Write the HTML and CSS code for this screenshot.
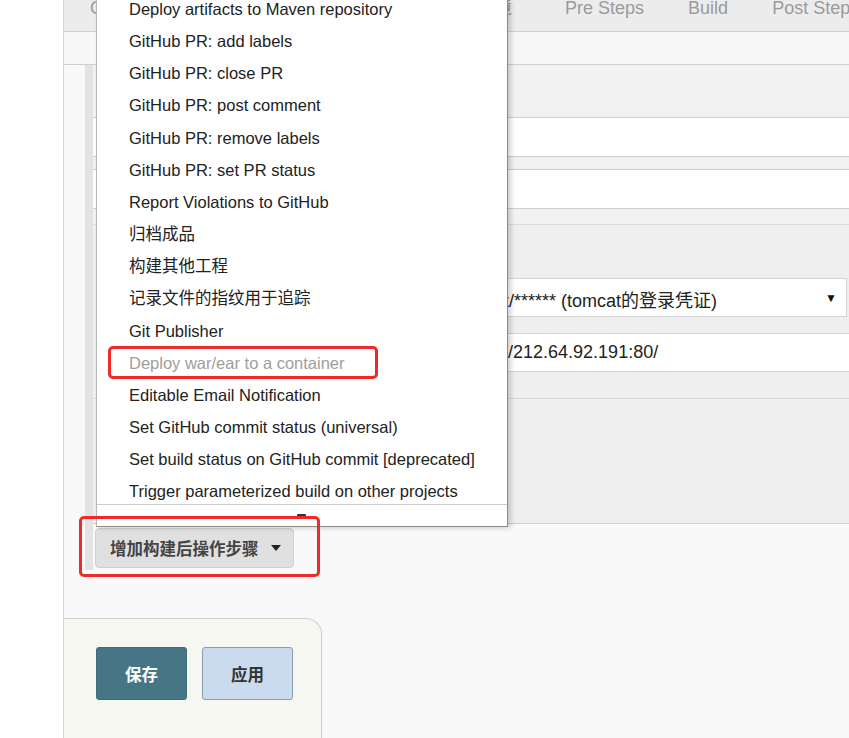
FILE: index.html
```html
<!DOCTYPE html>
<html lang="zh-CN">
<head>
<meta charset="utf-8">
<title>Jenkins 配置</title>
<link rel="stylesheet" href="styles.css">
</head>
<body>
<div class="page">
  <div class="gutter"></div>
  <div class="main">
    <div class="tabs">
      <span class="tab">General</span>
      <span class="tab">源码管理</span>
      <span class="tab">构建触发器</span>
      <span class="tab tab-env">构建环境</span>
      <span class="tab tab-pre">Pre Steps</span>
      <span class="tab">Build</span>
      <span class="tab">Post Steps</span>
    </div>
    <div class="sec-head"></div>
    <div class="config">
      <div class="row row-head"></div>
      <div class="row row-input"></div>
      <div class="row row-gap"></div>
      <div class="row row-input"></div>
      <div class="row row-gap2"></div>
      <div class="row deploy">
        <div class="select-box">
          <span class="select-text">tomcat/****** (tomcat的登录凭证)</span>
          <span class="select-arrow">▼</span>
        </div>
        <div class="url-box">http://212.64.92.191:80/</div>
        <div class="deploy-sep"></div>
      </div>
      <div class="add-area">
        <button class="add-btn">增加构建后操作步骤<span class="caret"></span></button>
      </div>
    </div>
    <div class="bottom-panel">
      <button class="btn btn-save">保存</button>
      <button class="btn btn-apply">应用</button>
    </div>
  </div>

  <div class="menu">
    <div class="menu-list">
      <ul class="menu-items">
        <li>Deploy artifacts to Maven repository</li>
        <li>GitHub PR: add labels</li>
        <li>GitHub PR: close PR</li>
        <li>GitHub PR: post comment</li>
        <li>GitHub PR: remove labels</li>
        <li>GitHub PR: set PR status</li>
        <li>Report Violations to GitHub</li>
        <li>归档成品</li>
        <li>构建其他工程</li>
        <li>记录文件的指纹用于追踪</li>
        <li>Git Publisher</li>
        <li class="disabled">Deploy war/ear to a container</li>
        <li>Editable Email Notification</li>
        <li>Set GitHub commit status (universal)</li>
        <li>Set build status on GitHub commit [deprecated]</li>
        <li>Trigger parameterized build on other projects</li>
      </ul>
    </div>
    <div class="menu-foot"><span class="scroll-mark"></span></div>
  </div>

  <div class="mark mark-item"></div>
  <div class="mark mark-btn"></div>
</div>
</body>
</html>
```

FILE: styles.css
```css
* { box-sizing: border-box; }
html, body { margin: 0; padding: 0; }
body {
  font-family: "Liberation Sans", Arial, "Noto Sans CJK SC", sans-serif;
  background: #fff;
  color: #222;
  overflow: hidden;
}
.page {
  position: relative;
  display: flex;
  width: 849px;
  height: 738px;
  overflow: hidden;
}
.gutter { width: 63px; flex: none; background: #fff; }
.main {
  flex: 1;
  border-left: 1px solid #d6d6d6;
  background: #f9f9f9;
  display: flex;
  flex-direction: column;
}
.tabs {
  height: 32px;
  flex: none;
  background: #ececec;
  border-bottom: 1px solid #d2d2d2;
  display: flex;
  align-items: flex-start;
  padding-left: 26px;
  gap: 44px;
  font-size: 18px;
  line-height: 18px;
  color: #9a9a9a;
  white-space: nowrap;
}
.tab { margin-top: -1px; }
.tab-env { margin-left: -8px; }
.tab-pre { margin-left: 9px; }
.sec-head {
  height: 33px;
  flex: none;
  background: #f7f7f7;
  border-bottom: 1px solid #d0d0d0;
}
.config {
  flex: none;
  margin-left: 21px;
  border-left: 8px solid #e3e3e3;
  height: 505px;
  display: flex;
  flex-direction: column;
}
.row { flex: none; border-bottom: 1px solid #cfcfcf; }
.row-head { height: 53px; background: #f2f2f2; }
.row-input { height: 39px; background: #fff; }
.row-gap { height: 13px; background: #f1f1f1; }
.row-gap2 { height: 16px; background: #f2f2f2; border-bottom-color: #dcdcdc; }
.deploy {
  height: 299px;
  background: #efefef;
  padding-top: 53px;
  padding-left: 347px;
  display: flex;
  flex-direction: column;
}
.select-box {
  height: 39px;
  width: 407px;
  background: #fff;
  border: 1px solid #d4d4d4;
  display: flex;
  align-items: center;
  justify-content: space-between;
  padding-left: 14px;
  padding-right: 9px;
  font-size: 18px;
  color: #222;
  white-space: nowrap;
}
.select-text { padding-top: 2px; }
.select-arrow { font-size: 12px; color: #111; }
.url-box {
  margin-top: 16px;
  height: 39px;
  margin-right: -2px;
  background: #fff;
  border: 1px solid #d4d4d4;
  border-right: none;
  padding-left: 27px;
  font-size: 18px;
  line-height: 37px;
  color: #222;
  white-space: nowrap;
}
.deploy-sep {
  margin-top: 26px;
  margin-left: -347px;
  border-top: 1px solid #d8d8d8;
}
.add-area {
  flex: 1;
  background: #f9f9f9;
  padding-top: 4px;
  padding-left: 2px;
}
.add-btn {
  height: 40px;
  width: 199px;
  background: #e0e0e0;
  border: 1px solid #d0d0d0;
  border-radius: 4px;
  font-family: "Liberation Sans", "Noto Sans CJK SC", sans-serif;
  font-weight: bold;
  font-size: 16.5px;
  color: #444;
  display: flex;
  align-items: center;
  padding: 0 0 0 14px;
  white-space: nowrap;
}
.caret {
  margin-left: 12px;
  width: 0; height: 0;
  border-left: 5px solid transparent;
  border-right: 5px solid transparent;
  border-top: 6px solid #222;
}
.bottom-panel {
  margin-top: 48px;
  width: 258px;
  flex: 1;
  background: #f7f7f1;
  border-top: 1px solid #cfcfcf;
  border-right: 1px solid #cfcfcf;
  border-top-right-radius: 16px;
  padding: 28px 0 0 32px;
  display: flex;
  align-items: flex-start;
  gap: 15px;
}
.btn {
  width: 91px;
  height: 53px;
  border-radius: 3px;
  font-family: "Liberation Sans", "Noto Sans CJK SC", sans-serif;
  font-weight: bold;
  font-size: 16.5px;
}
.btn-save { background: #467685; border: 1px solid #3f6c7a; color: #fff; }
.btn-apply { background: #cadbee; border: 1px solid #8d9db0; color: #333; }

.menu {
  position: absolute;
  left: 96px;
  top: 0;
  width: 412px;
  height: 527px;
  background: #fff;
  border-left: 1px solid #b8b8b8;
  border-right: 1px solid #8a8a8a;
  border-bottom: 1px solid #8a8a8a;
  box-shadow: 3px 1px 5px rgba(0,0,0,0.18);
  display: flex;
  flex-direction: column;
}
.menu-list { height: 504px; overflow: hidden; flex: none; }
.menu-items {
  list-style: none;
  margin: -7px 0 0 0;
  padding: 0 0 0 32px;
  font-size: 16.5px;
  line-height: 32.15px;
  color: #222;
  white-space: nowrap;
}
.menu-items .disabled { color: #9e9e9e; }
.menu-foot {
  flex: 1;
  border-top: 1px solid #cfcfcf;
  position: relative;
}
.scroll-mark {
  position: absolute;
  left: 200px;
  top: 9px;
  width: 9px;
  height: 4px;
  background: #333;
  border-radius: 1px;
}
.mark {
  position: absolute;
  border: 3px solid #f02a2a;
  border-radius: 5px;
}
.mark-item { left: 108px; top: 346px; width: 270px; height: 33px; }
.mark-btn { left: 79px; top: 516px; width: 241px; height: 61px; }
```
